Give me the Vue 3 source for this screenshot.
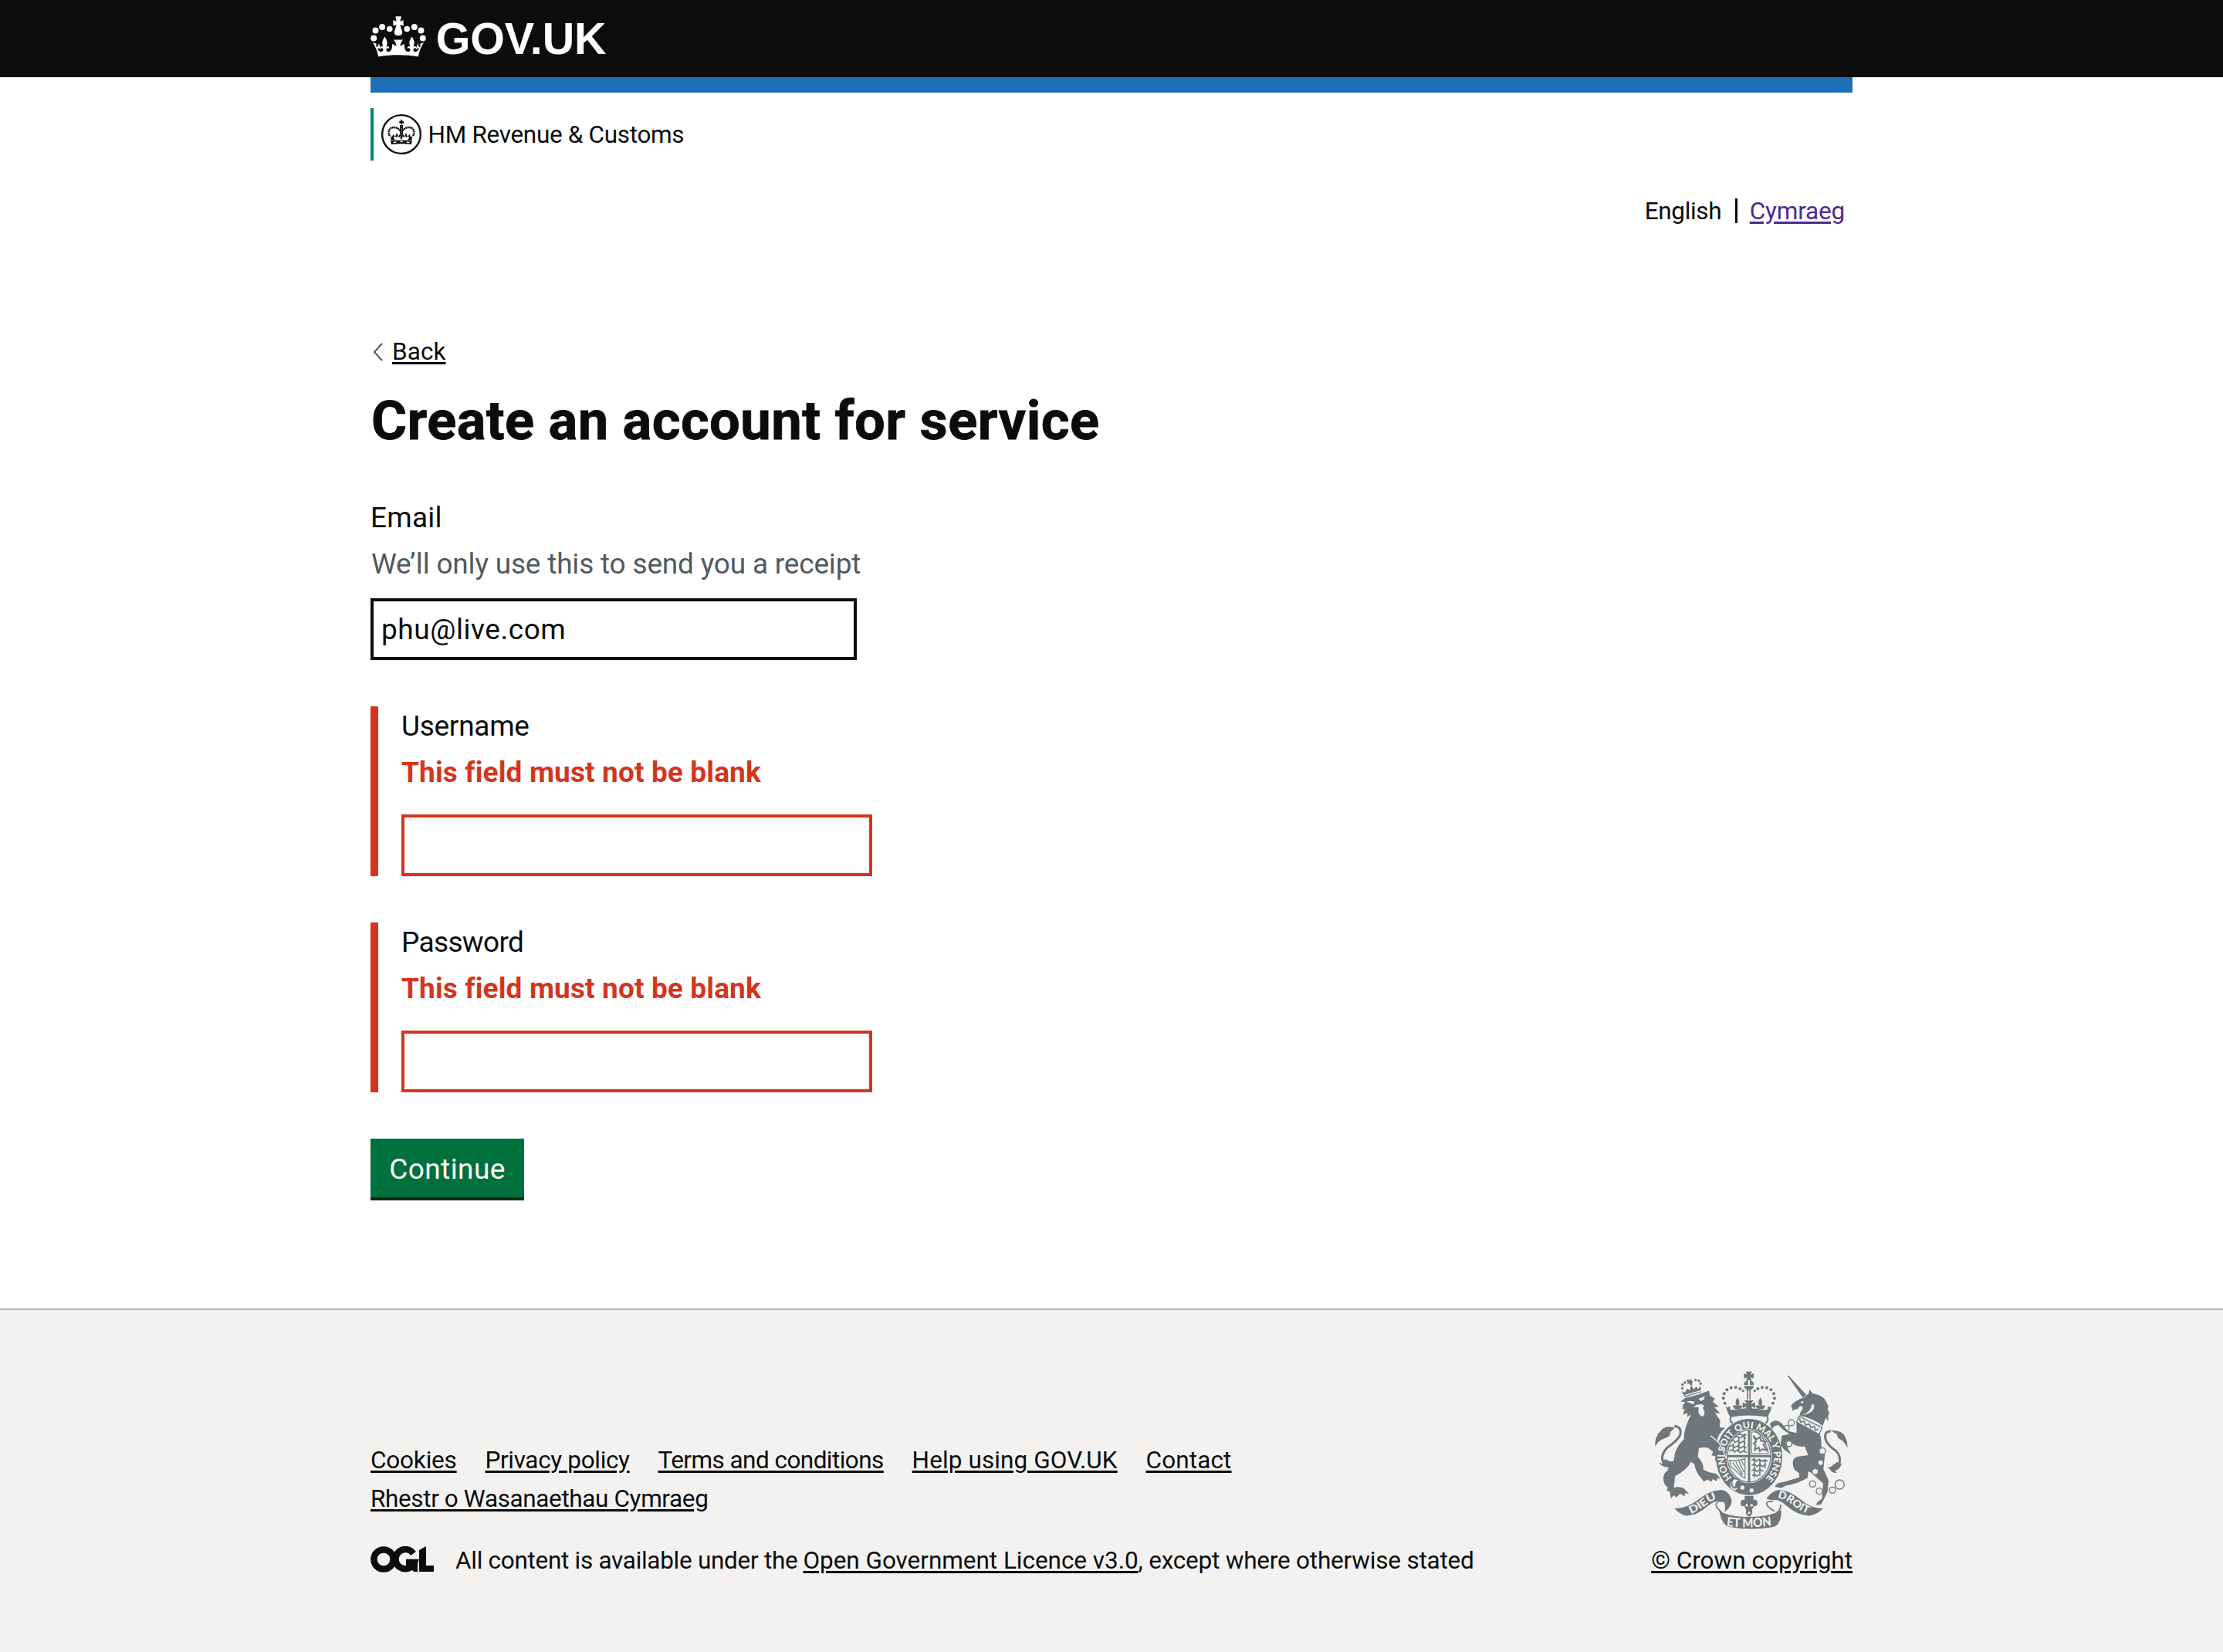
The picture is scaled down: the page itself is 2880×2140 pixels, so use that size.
<script setup>
import { ref } from 'vue'

const email = ref('phu@live.com')
const errorFields = [
  { id: 'username', label: 'Username', type: 'text' },
  { id: 'password', label: 'Password', type: 'password' },
]
</script>

<template>
  <div class="page">
    <header class="header">
      <div class="container header-inner">
        <svg class="crown" viewBox="30 32 216 160" aria-hidden="true">
          <defs>
            <g id="crown-half">
              <circle cx="42" cy="118" r="12" /><circle cx="49" cy="88" r="12" /><circle cx="75" cy="74" r="12" /><circle cx="104" cy="82" r="11.500" />
              <path d="M38 135l15 5c-2 7-2 10 1 14 4-3 7-8 8-17l8 26c-4-5-8-6-13-6 3 12 12 16 18 13 6-4 5-11 0-13-4-2-6 0-7 3-2-10 5-14 12-9-6-9-8-20 5-39 13 19 11 30 5 39 8-5 14-1 12 9-1-3-3-5-7-3-5 2-5 10 0 13 7 3 15-1 18-13L115 140q8 7 16 8-2-14-11-24h18.500v59.500Q98 183 60 190C56 168 48 151 38 135z" />
            </g>
          </defs>
          <g fill="#fff">
            <path d="M127 33h23l-5 19 13-5v23l-13-5 8 26c3 10-3 17-15 17s-18-7-15-17l8-26-13 5V47l13 5z" />
            <use href="#crown-half" /><use href="#crown-half" transform="translate(276 0) scale(-1 1)" />
          </g>
        </svg>
        <span class="logo-text">GOV.UK</span>
      </div>
    </header>

    <div class="container">
      <div class="blue-bar"></div>
      <div class="org">
        <svg class="org-crest" viewBox="0 0 156 156" aria-hidden="true">
          <circle cx="78" cy="78" r="74.500" fill="none" stroke="#0b0c0c" stroke-width="7" />
          <g fill="#0b0c0c">
            <path d="M74 22h9l-2 6 6-2v9l-6-2 2 6h-9l2-6-6 2v-9l6 2z" />
            <path d="M36 101h84l-3 16q-39-5-78 0z" />
            <path d="M32 78c3 7 5 14 6 22h16l-6-8 4-9 6 8 5-6 7 6 3-9 2 15h6l2-15 3 9 7-6 5 6 6-8 4 9-6 8h16c1-8 3-15 6-22l-9 13-5-14-8 11-6-16-6 14-7-10-5-3-5 3-7 10-6-14-6 16-8-11-5 14z" />
          </g>
          <path d="M78 42v44" stroke="#0b0c0c" stroke-width="12" />
          <path d="M78 46v38" stroke="#fff" stroke-width="2.500" stroke-dasharray="4 4" />
          <path d="M32 84C24 64 32 52 48 51c12 0 20 6 26 14M124 84c8-20 0-32-16-33-12 0-20 6-26 14" fill="none" stroke="#0b0c0c" stroke-width="7" stroke-dasharray="6 1.500" />
          <path d="M46 110l12-2M74 106h9M98 108l12 2" stroke="#fff" stroke-width="4" />
        </svg>
        <span class="org-name">HM Revenue &amp; Customs</span>
      </div>

      <nav class="languages">
        <span class="lang-current">English</span>
        <span class="lang-divider"></span>
        <a class="lang-link" href="#">Cymraeg</a>
      </nav>

      <a class="back" href="#">
        <svg class="chevron" viewBox="0 0 13 24" aria-hidden="true"><path d="M12 1L2 12l10 11" fill="none" stroke="#505a5f" stroke-width="2" /></svg>
        <span class="back-text">Back</span>
      </a>

      <h1 class="title">Create an account for service</h1>

      <form @submit.prevent>
        <div class="group">
          <label class="label email" for="email">Email</label>
          <div class="hint">We’ll only use this to send you a receipt</div>
          <input id="email" v-model="email" class="input input-email" type="text" />
        </div>
        <div v-for="f in errorFields" :key="f.id" class="group group-error">
          <label class="label" :class="f.id" :for="f.id">{{ f.label }}</label>
          <p class="error">This field must not be blank</p>
          <input :id="f.id" class="input input-error" :type="f.type" />
        </div>
        <button class="button" type="submit">Continue</button>
      </form>
    </div>

    <footer class="footer">
      <div class="container footer-inner">
        <div class="footer-left">
          <div class="links">
            <a class="link cookies" href="#">Cookies</a>
            <a class="link privacy" href="#">Privacy policy</a>
            <a class="link terms" href="#">Terms and conditions</a>
            <a class="link help" href="#">Help using GOV.UK</a>
            <a class="link contact" href="#">Contact</a>
          </div>
          <div class="links"><a class="link rhestr" href="#">Rhestr o Wasanaethau Cymraeg</a></div>
          <div class="licence">
            <svg class="ogl" viewBox="0 0 82 34" aria-hidden="true">
              <g fill="none" stroke="#0b0c0c" stroke-width="8.500">
                <circle cx="17" cy="17" r="12.600" />
                <path d="M55.500 9.500A12.600 12.600 0 1 0 57 21H46" />
              </g>
              <path d="M52 19h9v14h-5l-4-5zM63 5l9-5v25h10v8H63z" fill="#0b0c0c" />
            </svg>
            <span class="licence-text"><span class="lic-a">All content is available under the</span><a class="link lic-b" href="#">Open Government Licence v3.0</a><span class="lic-c">, except where otherwise stated</span></span>
          </div>
        </div>

        <a class="copyright" href="#">
          <svg class="arms" viewBox="60 40 780 639" aria-hidden="true">
            <defs>
              <path id="garter" d="M372 464A97 111 0 1 1 490 477" />
              <path id="dieu" d="M212 604Q250 588 278 564Q298 548 324 546" />
              <path id="droit" d="M548 542Q580 547 606 569Q634 593 674 606" />
              <path id="etmon" d="M350 652Q438 662 528 649" />
              <g id="dots"><circle cx="360" cy="192" r="5" /><circle cx="344" cy="174" r="6" /><circle cx="338" cy="155" r="6" /><circle cx="341" cy="137" r="6" /><circle cx="352" cy="122" r="6" /><circle cx="368" cy="114" r="6" /><circle cx="386" cy="113" r="6" /><circle cx="403" cy="118" r="6" /><circle cx="415" cy="126" r="5" /></g>
              <path id="fleur" d="M393 152q14 20 3 33q12-8 17 4q-6-2-8 8h-24q-2-10-8-8q5-12 17-4q-11-13 3-33z" />
            </defs>
            <g fill="#6f777b">
              <!-- crown -->
              <path d="M425 51h24l-5 12 12-5v20l-12-5 4 11h-22l4-11-12 5V58l12 5zM418 103q1-16 16-18v18zM441 85q15 2 16 18h-16zM419 107h37q-1 12-12 15v38h-5v-36h-5v36h-5v-38q-9-4-10-15z" />
              <use href="#dots" /><use href="#dots" transform="translate(875 0) scale(-1 1)" />
              <use href="#fleur" /><use href="#fleur" transform="translate(89 0)" />
              <path d="M420 163h35l-10 14 17-6v22l-15-6 6 12h-31l6-12-15 6v-22l17 6zM347 182q10 20 34 18 56-12 113 0 23 2 33-18-3 22-16 44-73-14-148 0-13-22-16-44z" />
              <!-- lion -->
              <path d="M176 128l12 22 64-19-2-24-10 12-8-10-8 12-12-18-4 21-12-7-6 15z" />
              <path d="M199 82l9 2 6-4 1 8 6 2-5 6 2 8h-10l-2-6-8 2 2-8-6-4z" />
              <circle cx="179" cy="116" r="5" /><circle cx="179" cy="102" r="5" /><circle cx="189" cy="94" r="5" /><circle cx="230" cy="84" r="5" /><circle cx="243" cy="87" r="5" /><circle cx="250" cy="98" r="5" />
              <path d="M172 168l18-15q45-8 92-28l4 20 19 11-8 12 23 20-17 2 23 23-20-1 20 30-3 25 22 3-14 13q-12 14-17 34l15 22 17 46-6 21-22 8 4-12-16-4 1-18-15-3 6-14-18-15q-18-4-37 1l-4 34q22 22 22 50 24 13 48 15 13 8 18 22l-12-6-2 13-16-8-5 10-16-8-14 8-8-11q-24-25-29-58l-14-8q-12 30-60 55l-6 45q26-6 42 5l18 20-15-4-3 13-17-10-16 14-8-8-12 12-4-25-13-8 6-9q-20-12-18-42l5-14q34-24 37-60 3-38 38-72-2-40 28-96l-16 10 2-16-18 7 7-24-10 3q2-20 13-28z" />
              <path d="M73 344q-2-32 10-46l-1-6 8-4q14-30 58-20-4 10-16 18 4 16-20 24-28 8-39 34z" />
              <path d="M88 404l12 6q2-14 14-18 22 18 46-2l-6 12 10 2-16 12q2 16-28 18l6-10q-30-2-38-20z" />
              <!-- unicorn -->
              <path d="M587 67l6 1 68 74-15 10z" />
              <path d="M601 186Q608 168 650 152L669 138 673 122 686 137Q724 142 738 168L746 186 743 196 750 214 745 224 747 244 736 231 724 262Q690 234 634 222L638 208Q650 198 644 186 632 184 628 196L616 198 604 206 607 196z" />
              <path d="M622 246l92 48q6 22 5 46l14 30-6 60 20 44-4 44-14 30-12 20-18 2q0-12 22-24l5-60-50-44-8-2-2 24q-40 24-84 30l-20 10-24-6q6-16 36-18l60-18-2-16-18-14q-16-40 10-50l44-6-14-34q-30 6-62-20l-4 26 14 26-24-16-18-20 5-38 30-6-26-18-18-18-16 6-8 12-8-22q22-24 46-2l24 30 34 8z" />
              <path d="M820 348q2-24-8-42-10-28-56-26 14 10 24 16 0 16 18 22 14 10 22 30zM740 424q14 2 24-10l18-12 6 10 10-6q-4 24-26 30l8 10q-24-2-28-16z" />
              <!-- garter -->
              <ellipse cx="438" cy="383" rx="129" ry="148" />
              <!-- ribbons -->
              <path d="M148 583q46 2 100-40 46-36 88-31 26 8 34 38 4 22-28 48 8-28-2-40-22-14-60 14-46 42-88 39-22-4-44-28zM726 583q-46 2-94-40-46-36-84-31-26 8-42 32 4 6 26 6 22-4 50 22 50 42 92 39 28-4 52-28z" />
              <path d="M322 592q40 24 116 24 80 0 126-26-2 62-36 66-90 14-172-2-24-10-34-62z" />
              <path d="M421 534h34v16q16-4 16 14-2 12-14 10l-8 14q6 18-11 28-17-10-11-28l-8-14q-14 2-14-10 0-18 16-14z" />
            </g>
            <g fill="none" stroke="#6f777b">
              <path d="M368 224q-8 20 6 28M508 224q8 20-6 28M368 225q70-13 140 0" stroke-width="6" />
              <path d="M148 263q30 4 22 34-6 18-50 50-30 32-14 60" stroke-width="9" />
              <path d="M756 284q-24-4-22 26 6 26 40 48 24 22 14 54" stroke-width="9" />
              <path d="M340 556q-38-6-28 22 12 14 20 20M532 556q-36-2-22 18 6 8 28 20M560 568q4 20-16 32" stroke-width="5" />
              <g stroke-width="4"><circle cx="602" cy="250" r="12" /><circle cx="584" cy="270" r="10" /><circle cx="685" cy="488" r="12" /><circle cx="711" cy="516" r="12" /><circle cx="762" cy="512" r="12" /><circle cx="790" cy="490" r="18" /></g>
            </g>
            <g fill="#f3f2f1">
              <ellipse cx="438" cy="380" rx="89" ry="105" />
              <path d="M194 168l16-3 16 3-4 10zM242 156l24-8-4 12-12 6zM222 190l12-10 20-2 10 6-6 8 6 12q4 14-7 22-16-4-16-24l2-12zM188 142l68-20v4l-66 20z" />
              <circle cx="716" cy="405" r="9" /><circle cx="695" cy="440" r="10" /><circle cx="593" cy="332" r="13" /><circle cx="723" cy="360" r="14" />
              <circle cx="412" cy="502" r="8" /><circle cx="448" cy="513" r="8" /><circle cx="429" cy="571" r="5" /><circle cx="448" cy="571" r="5" /><circle cx="438" cy="600" r="5" />
              <path d="M366 480q-8 24 18 34l8-8q-14-10-4-26l14-10-10-8z" />
              <path d="M690 178q8 34-46 42 34-12 38-40zM638 170l10-4 2 6-8 2z" />
            </g>
            <path d="M632 225l90 44-12 26-88-48z" fill="#f3f2f1" stroke="#6f777b" stroke-width="4" />
            <g fill="none" stroke="#6f777b">
              <ellipse cx="438" cy="380" rx="84" ry="101" stroke-width="4" />
              <path d="M354 380h168M438 279v202" stroke-width="9" />
              <path d="M447 286h18q36 20 48 84h-66z" stroke-width="3.500" />
              <path d="M366 324l10-8 8 10 12-6 6 10 12-8 10 8M380 308l12-6 8 8 12-6 14 6M362 342l12-4 8 8 12-6 10 8 12-6 12 6M360 360l14-6 8 10 12-8 10 10 12-6 12 6M394 296l12-2 8 6 14-4M376 330v32M398 306v58M420 292v72" stroke-width="5" />
              <path d="M454 300l14 14 12-8 4 14 18 4-8 12 14 22-18-6-10 8-4-14-16 10 4-18-8-8 10-6z" stroke-width="6" />
              <path d="M362 396q30 4 60-6v76q-14-6-22-16l-32-30zM374 404l36 50M386 400l28 52M398 398l20 44M408 396l10 20" stroke-width="3.500" />
              <path d="M448 396l10-6 8 10 12-8 10 8 12-6 10 6M448 416l12-6 8 10 12-8 10 8 14-8M448 436l12-6 8 10 12-8 14 6M450 456l10-6 8 8 12-6M458 392v72M480 392v64M500 392v36" stroke-width="5" />
              <path d="M374 472q-12 20 8 32 10-16 22-18-6-20-22-18" stroke-width="6" />
              <path d="M634 232l4 16 14-4 6 16 14-6 6 16 14-6 4 16 12-6" stroke-width="5" />
              <circle cx="593" cy="332" r="11" stroke-width="4" /><circle cx="723" cy="360" r="12" stroke-width="4" />
            </g>
            <path d="M288 300q30 22 38 36 12 20 22 52" fill="none" stroke="#f3f2f1" stroke-width="4" />
            <g class="motto">
              <text font-size="36"><textPath href="#garter" textLength="508" lengthAdjust="spacingAndGlyphs">HONI SOIT QUI MAL Y PENSE</textPath></text>
              <text font-size="41"><textPath href="#dieu" textLength="116" lengthAdjust="spacingAndGlyphs">DIEU</textPath></text>
              <text font-size="41"><textPath href="#droit" textLength="134" lengthAdjust="spacingAndGlyphs">DROIT</textPath></text>
              <text font-size="49"><textPath href="#etmon" textLength="176" lengthAdjust="spacingAndGlyphs">ET MON</textPath></text>
            </g>
          </svg>
          <span class="link crown-copyright">© Crown copyright</span>
        </a>
      </div>
    </footer>
  </div>
</template>

<style>
body { background: #fff; }
</style>

<style scoped>
.page { width: 2880px; height: 2140px; display: flex; flex-direction: column; overflow: hidden; font-family: Roboto, 'Noto Sans', sans-serif; font-size: 31.5px; line-height: 40px; color: #0b0c0c; }
.container { width: 1920px; margin: 0 auto; }
.header { height: 100px; background: #0b0c0c; }
.header-inner { height: 100px; display: flex; align-items: flex-start; }
.crown { width: 72px; height: 53px; margin-top: 21px; }
.logo-text { margin: 20px 0 0 12.7px; font: 700 57.5px/60px 'Liberation Sans', Arial, sans-serif; letter-spacing: -0.14px; color: #fff; }
.blue-bar { height: 20px; background: #1d70b8; }
.org { box-sizing: border-box; height: 68px; margin-top: 20px; border-left: 4px solid #008670; padding-left: 10px; display: flex; align-items: center; }
.org-crest { width: 52px; height: 52px; }
.org-name { margin-left: 8.6px; padding-top: 2px; letter-spacing: -0.32px; }
.languages { display: flex; justify-content: flex-end; align-items: center; height: 40px; margin-top: 46px; padding-right: 10px; }
.lang-current { letter-spacing: -0.34px; }
.lang-divider { width: 3px; height: 32px; margin: -2px 16px 0 17.5px; background: #0b0c0c; }
.lang-link { letter-spacing: -0.2px; color: #4c2c92; text-decoration: underline 3px; text-underline-offset: 3px; }
.back { display: flex; align-items: center; width: max-content; margin-top: 142px; color: #0b0c0c; text-decoration: none; }
.chevron { width: 13px; height: 24px; margin: 0 12px 0 3px; }
.back-text { letter-spacing: 0.08px; text-decoration: underline 3px; text-underline-offset: 3px; }
.title { margin: 29px 0 60px; padding-left: 1px; font-size: 70.5px; line-height: 80px; font-weight: 700; letter-spacing: 0.43px; -webkit-text-stroke: 0.8px #0b0c0c; }
.group { display: flex; flex-direction: column; align-items: flex-start; height: 210px; margin-bottom: 60px; font-size: 37px; line-height: 50px; }
.group-error { height: 220px; border-left: 10px solid #d4351c; padding-left: 30px; }
.label { padding-top: 1px; height: 49px; }
.email { letter-spacing: 0.2px; }
.username { letter-spacing: -0.28px; }
.password { letter-spacing: -0.65px; }
.hint { margin-top: 11px; height: 49px; padding-left: 1px; letter-spacing: -0.19px; color: #505a5f; }
.error { margin: 11px 0 0; height: 49px; font-weight: 700; letter-spacing: 0.13px; color: #d4351c; }
.input { box-sizing: border-box; height: 80px; border: 4px solid #0b0c0c; border-radius: 0; background: #fff; padding: 0 10px; font-family: inherit; font-size: 37px; color: #0b0c0c; outline: none; }
.input-email { width: 630px; margin-top: 20px; letter-spacing: 0.55px; }
.input-error { width: 610px; margin-top: 30px; border-color: #d4351c; }
.button { display: block; box-sizing: border-box; width: 199px; height: 80px; border: 0; border-bottom: 4px solid #002d18; padding: 2px 0 0; background: #00703c; color: #fff; font-family: inherit; font-size: 37px; letter-spacing: 0.42px; }
.footer { box-sizing: border-box; flex: 1; margin-top: 140px; border-top: 2px solid #b1b4b6; background: #f3f2f1; }
.footer-inner { display: flex; justify-content: space-between; align-items: flex-end; height: 350px; line-height: 50px; }
.links { display: flex; gap: 36.8px; }
.link { color: #0b0c0c; text-decoration: underline 3px; text-underline-offset: 3px; }
.cookies { letter-spacing: -0.19px; }
.privacy { letter-spacing: -0.34px; }
.terms { letter-spacing: -0.55px; }
.help { letter-spacing: 0.1px; }
.contact { letter-spacing: 0.13px; }
.rhestr { letter-spacing: -0.38px; }
.licence { display: flex; align-items: center; margin-top: 30px; }
.ogl { width: 82px; height: 34px; margin: -5px 28px 0 0; }
.licence-text { white-space: nowrap; }
.lic-a { margin-right: 7px; letter-spacing: -0.29px; }
.lic-b { letter-spacing: -0.04px; }
.lic-c { letter-spacing: -0.21px; }
.copyright { display: flex; flex-direction: column; align-items: flex-end; text-decoration: none; }
.arms { width: 260px; height: 213px; margin-bottom: 11px; }
.motto { font-family: Lato, sans-serif; font-weight: 900; fill: #f3f2f1; }
</style>
